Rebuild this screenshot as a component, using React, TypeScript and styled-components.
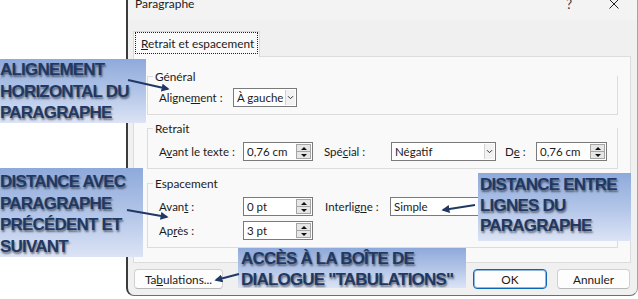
import styled, { createGlobalStyle } from "styled-components";

const GlobalStyle = createGlobalStyle`
  html, body {
    margin: 0;
    padding: 0;
    background: #ffffff;
  }
  body {
    font-family: Lato, "Noto Sans", sans-serif;
    color: #1b1b1b;
  }
  * {
    box-sizing: border-box;
  }
`;

const Page = styled.div`
  position: relative;
  width: 638px;
  height: 299px;
  overflow: hidden;
  display: flex;
  align-items: flex-start;
  padding-left: 126px;
`;

const Dialog = styled.div`
  width: 512px;
  height: 296px;
  display: flex;
  flex-direction: column;
  background: #f0f0f0;
  border-left: 2px solid #3b3b3b;
  border-right: 1px solid #a3a3a3;
  border-bottom: 1px solid #6e6e6e;
  border-radius: 0 0 8px 8px;
`;

const TitleBar = styled.div`
  flex: none;
  height: 20px;
  display: flex;
  align-items: flex-start;
  padding: 0 18px 0 7px;
  background: #f3f3f3;
  overflow: hidden;
`;

const Title = styled.span`
  margin-top: -3px;
  font-size: 12px;
  line-height: 14px;
`;

const Help = styled.span`
  margin-left: auto;
  margin-top: -3px;
  font-size: 13px;
  line-height: 14px;
  color: #333;
`;

const Close = styled.svg`
  margin: -1px 0 0 37px;
  flex: none;
`;

const Body = styled.div`
  flex: 1;
  display: flex;
  flex-direction: column;
  padding: 11px 6px 0 5px;
`;

const Tab = styled.div`
  position: relative;
  z-index: 1;
  align-self: flex-start;
  width: 127px;
  height: 26px;
  margin-bottom: -1px;
  padding: 0 1px 3px;
  background: #f9f9f9;
  border: 1px solid #d9d9d9;
  border-bottom: none;
`;

const FocusRing = styled.div`
  height: 22px;
  display: flex;
  align-items: center;
  padding-left: 5px;
  border: 1px dotted #222;
  font-size: 11.8px;
`;

const Panel = styled.div`
  height: 207px;
  display: flex;
  flex-direction: column;
  padding: 19px 12px 14px 13px;
  background: #f9f9f9;
  border: 1px solid #dcdcdc;
`;

const Group = styled.div<{ $mb?: number }>`
  display: flex;
  flex-direction: column;
  padding: 0 0 7px 11px;
  margin-bottom: ${(p) => p.$mb ?? 0}px;
  border: 1px solid #dcdcdc;
  border-top: none;
`;

const GroupHead = styled.div<{ $gap: number }>`
  height: 14px;
  margin: -7px 0 ${(p) => p.$gap - 7}px -12px;
  display: flex;
  align-items: center;
  font-size: 11.8px;

  &::before {
    content: "";
    width: 6px;
    height: 1px;
    margin-right: 2px;
    background: #dcdcdc;
  }
`;

const Row = styled.div`
  height: 19px;
  display: flex;
  align-items: center;
`;

const Grid = styled.div`
  display: grid;
  grid-template-columns: 84px 70px 12px 65px 106px;
  grid-template-rows: 19px 19px;
  row-gap: 5px;
  align-items: center;
`;

const Label = styled.span<{ $w?: number }>`
  flex: none;
  width: ${(p) => (p.$w ? `${p.$w}px` : "auto")};
  font-size: 11.5px;
  white-space: nowrap;
`;

const Mn = styled.u`
  text-underline-offset: 1px;
`;

const Gap = styled.span<{ $w: number }>`
  flex: none;
  width: ${(p) => p.$w}px;
`;

const Field = styled.div<{ $w: number }>`
  flex: none;
  width: ${(p) => p.$w}px;
  height: 19px;
  display: flex;
  align-items: stretch;
  padding: 1px;
  background: #ffffff;
  border: 1px solid #7a7a7a;
`;

const Value = styled.span`
  flex: 1;
  padding-left: 2px;
  font-size: 11.5px;
  line-height: 15px;
  white-space: nowrap;
  overflow: hidden;
`;

const Spinner = styled.div`
  width: 15px;
  display: flex;
  flex-direction: column;
  background: #e6e6e6;
  border: 1px solid #a5a5a5;
`;

const SpinBtn = styled.div`
  flex: 1;
  display: flex;
  align-items: center;
  justify-content: center;

  & + & {
    border-top: 1px solid #a5a5a5;
  }
`;

const Tri = styled.span<{ $up?: boolean }>`
  width: 0;
  height: 0;
  border-left: 3px solid transparent;
  border-right: 3px solid transparent;
  ${(p) => (p.$up ? "border-bottom: 3px solid #111;" : "border-top: 3px solid #111;")}
`;

const Drop = styled.div`
  width: 10px;
  display: flex;
  align-items: center;
  justify-content: center;
  background: #f2f2f2;
  border-left: 1px solid #d2d2d2;
`;

const Buttons = styled.div`
  margin-top: 6px;
  display: flex;
  justify-content: space-between;
  padding: 0 1px;
`;

const ButtonGroup = styled.div`
  display: flex;
  gap: 10px;
`;

const Button = styled.div<{ $w: number; $primary?: boolean }>`
  width: ${(p) => p.$w}px;
  height: 20px;
  display: flex;
  align-items: center;
  justify-content: center;
  font-size: 11.8px;
  background: #fdfdfd;
  border: 1px solid ${(p) => (p.$primary ? "#0a64b8" : "#d0d0d0")};
  border-bottom-color: ${(p) => (p.$primary ? "#0a64b8" : "#b8b8b8")};
  box-shadow: ${(p) => (p.$primary ? "inset 0 0 0 1px rgba(10,100,184,0.45)" : "none")};
  border-radius: 4px;
`;

const Callout = styled.div<{
  $x: number;
  $y: number;
  $w: number;
  $h: number;
  $pt: number;
  $pl: number;
  $lh: number;
}>`
  position: absolute;
  left: ${(p) => p.$x}px;
  top: ${(p) => p.$y}px;
  width: ${(p) => p.$w}px;
  height: ${(p) => p.$h}px;
  padding: ${(p) => p.$pt}px 0 0 ${(p) => p.$pl}px;
  background: linear-gradient(180deg, #8eaadb 0%, #b5c7e9 55%, #dce4f5 100%);
  font-family: "Liberation Sans", Arial, sans-serif;
  font-weight: 700;
  font-size: 17px;
  line-height: ${(p) => p.$lh}px;
  letter-spacing: -0.8px;
  color: #1f3864;
  text-shadow: 1px 2px 2px rgba(0, 0, 0, 0.5);
  white-space: nowrap;
  overflow: hidden;
`;

const Arrows = styled.svg`
  position: absolute;
  left: 0;
  top: 0;
  pointer-events: none;
`;

function Spin({ w, value }: { w: number; value: string }) {
  return (
    <Field $w={w}>
      <Value>{value}</Value>
      <Spinner>
        <SpinBtn>
          <Tri $up />
        </SpinBtn>
        <SpinBtn>
          <Tri />
        </SpinBtn>
      </Spinner>
    </Field>
  );
}

function Select({ w, value }: { w: number; value: string }) {
  return (
    <Field $w={w}>
      <Value>{value}</Value>
      <Drop>
        <svg width="7" height="5" viewBox="0 0 7 5">
          <path d="M1 1.2 L3.5 3.7 L6 1.2" fill="none" stroke="#333" strokeWidth="1" />
        </svg>
      </Drop>
    </Field>
  );
}

const arrows = [
  [128, 80, 168, 89],
  [127, 210, 167, 217],
  [239, 274, 216, 280],
  [475, 205, 443, 210],
];

export default function App() {
  return (
    <Page>
      <GlobalStyle />
      <Dialog>
        <TitleBar>
          <Title>Paragraphe</Title>
          <Help>?</Help>
          <Close width="10" height="10" viewBox="0 0 10 10">
            <path d="M0.5 0.5 L9.5 9.5 M9.5 0.5 L0.5 9.5" stroke="#222" strokeWidth="1" />
          </Close>
        </TitleBar>
        <Body>
          <Tab>
            <FocusRing>
              <span>
                <Mn>R</Mn>etrait et espacement
              </span>
            </FocusRing>
          </Tab>
          <Panel>
            <Group $mb={13}>
              <GroupHead $gap={12}>Général</GroupHead>
              <Row>
                <Label $w={74}>
                  Aligne<Mn>m</Mn>ent :
                </Label>
                <Select w={64} value="À gauche" />
              </Row>
            </Group>
            <Group $mb={14}>
              <GroupHead $gap={14}>Retrait</GroupHead>
              <Row>
                <Label $w={84}>
                  A<Mn>v</Mn>ant le texte :
                </Label>
                <Spin w={70} value="0,76 cm" />
                <Gap $w={11} />
                <Label $w={67}>
                  Spé<Mn>c</Mn>ial :
                </Label>
                <Select w={105} value="Négatif" />
                <Gap $w={9} />
                <Label $w={31}>
                  D<Mn>e</Mn> :
                </Label>
                <Spin w={71} value="0,76 cm" />
              </Row>
            </Group>
            <Group>
              <GroupHead $gap={14}>Espacement</GroupHead>
              <Grid>
                <Label>
                  Avan<Mn>t</Mn> :
                </Label>
                <Spin w={70} value="0 pt" />
                <span />
                <Label>
                  Interlig<Mn>n</Mn>e :
                </Label>
                <Select w={106} value="Simple" />
                <Label>
                  Ap<Mn>r</Mn>ès :
                </Label>
                <Spin w={70} value="3 pt" />
              </Grid>
            </Group>
          </Panel>
          <Buttons>
            <Button $w={89}>
              <span>
                Ta<Mn>b</Mn>ulations...
              </span>
            </Button>
            <ButtonGroup>
              <Button $w={74} $primary>
                OK
              </Button>
              <Button $w={73}>Annuler</Button>
            </ButtonGroup>
          </Buttons>
        </Body>
      </Dialog>

      <Callout $x={0} $y={59} $w={146} $h={64} $pt={0} $pl={0} $lh={21.5}>
        ALIGNEMENT
        <br />
        HORIZONTAL DU
        <br />
        PARAGRAPHE
      </Callout>
      <Callout $x={0} $y={168} $w={143} $h={89} $pt={3} $pl={0} $lh={21.5}>
        DISTANCE AVEC
        <br />
        PARAGRAPHE
        <br />
        PRÉCÉDENT ET
        <br />
        SUIVANT
      </Callout>
      <Callout $x={238} $y={248} $w={228} $h={40} $pt={0} $pl={3} $lh={21}>
        ACCÈS À LA BOÎTE DE
        <br />
        DIALOGUE "TABULATIONS"
      </Callout>
      <Callout $x={478} $y={173} $w={153} $h={68} $pt={2} $pl={2} $lh={20.5}>
        DISTANCE ENTRE
        <br />
        LIGNES DU
        <br />
        PARAGRAPHE
      </Callout>

      <Arrows width="638" height="299" viewBox="0 0 638 299">
        <defs>
          <marker
            id="head"
            viewBox="0 0 10 10"
            refX="8"
            refY="5"
            markerWidth="4"
            markerHeight="4"
            orient="auto"
          >
            <path d="M0 0 L10 5 L0 10 z" fill="#1f3864" />
          </marker>
        </defs>
        {arrows.map(([x1, y1, x2, y2], i) => (
          <line
            key={i}
            x1={x1}
            y1={y1}
            x2={x2}
            y2={y2}
            stroke="#1f3864"
            strokeWidth="2"
            markerEnd="url(#head)"
          />
        ))}
      </Arrows>
    </Page>
  );
}
